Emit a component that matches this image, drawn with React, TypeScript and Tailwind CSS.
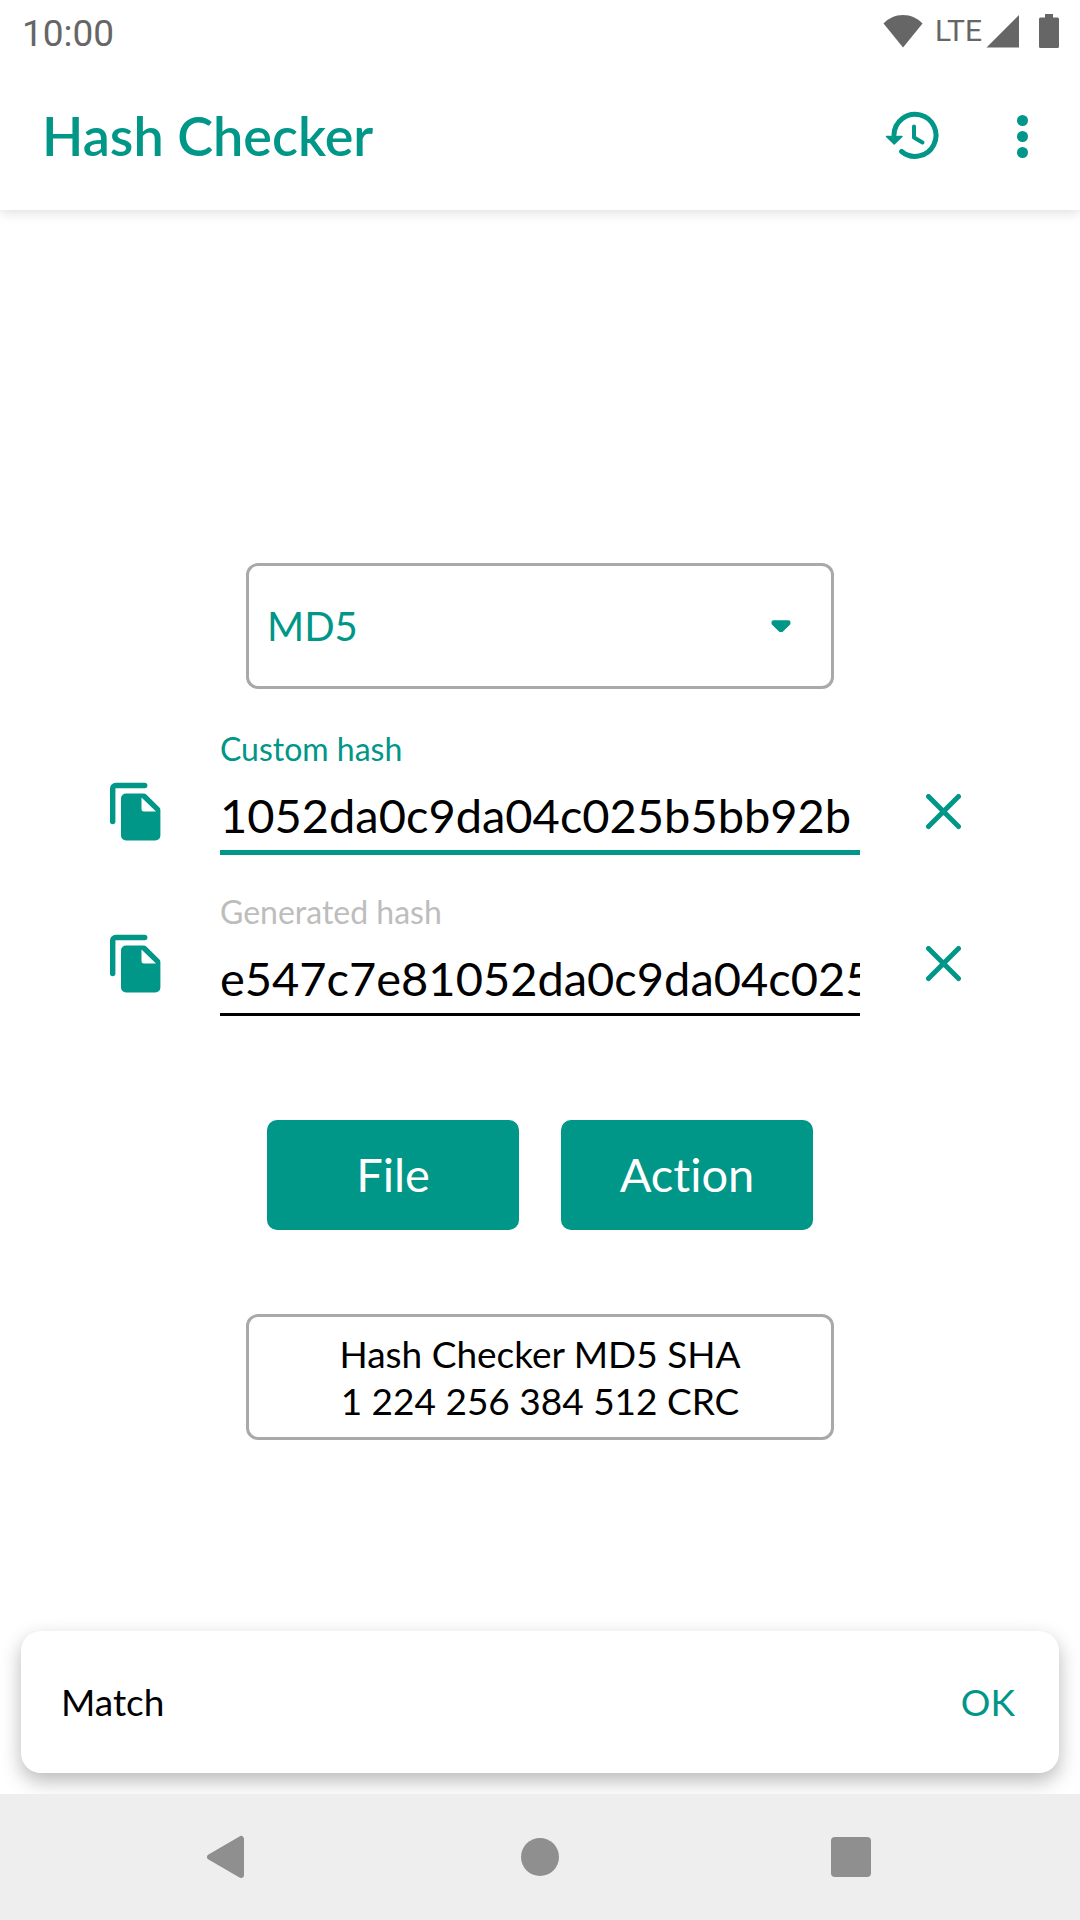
import { useState } from "react";

function HistoryIcon() {
  return (
    <svg width="56" height="56" viewBox="0 0 56 56" fill="none" stroke="currentColor" strokeLinecap="round" aria-hidden="true">
      <path d="M10 27a21 21 0 1 1 7.600 16.500" strokeWidth="5" />
      <path d="M30 18.500v11l8.500 5" strokeWidth="4" strokeLinejoin="round" />
      <path d="M2.500 28.500h15.500l-7.800 7.500z" fill="currentColor" strokeWidth="1.400" strokeLinejoin="round" />
    </svg>
  );
}

function MoreIcon() {
  return (
    <svg width="56" height="56" viewBox="0 0 56 56" fill="currentColor" aria-hidden="true">
      <circle cx="28.500" cy="12.500" r="5.500" />
      <circle cx="28.500" cy="28.500" r="5.500" />
      <circle cx="28.500" cy="44.500" r="5.500" />
    </svg>
  );
}

function CopyIcon() {
  return (
    <svg width="52" height="60" viewBox="0 0 52 60" fill="none" aria-hidden="true">
      <path d="M2.700 39.500V6.500a3 3 0 0 1 3-3h29" stroke="currentColor" strokeWidth="5.400" strokeLinecap="round" />
      <path
        d="M16 11.500h17.500a4 4 0 0 1 3 1.200l12.700 12.600a4 4 0 0 1 1.200 3V53.500a5 5 0 0 1-5 5H16a5 5 0 0 1-5-5v-37a5 5 0 0 1 5-5z"
        fill="currentColor"
      />
      <path d="M31.500 15.500v11.500a2.500 2.500 0 0 0 2.500 2.500H46z" fill="white" />
    </svg>
  );
}

function CloseIcon() {
  return (
    <svg width="36" height="36" viewBox="0 0 36 36" stroke="currentColor" strokeWidth="5" strokeLinecap="round" aria-hidden="true">
      <path d="M2.500 2.500l30 30M32.500 2.500l-30 30" />
    </svg>
  );
}

type HashFieldProps = {
  id: string;
  label: string;
  value: string;
  active?: boolean;
  onChange: (value: string) => void;
};

function HashField({ id, label, value, active, onChange }: HashFieldProps) {
  return (
    <div className="flex h-[163px] flex-col pt-1">
      <label htmlFor={id} className={active ? "text-[32px] leading-10 text-[#009688]" : "text-[32px] leading-10 text-[#bdbdbd]"}>
        {label}
      </label>
      <input
        id={id}
        type="text"
        value={value}
        spellCheck={false}
        onChange={(e) => onChange(e.target.value)}
        className={
          active
            ? "h-[86px] w-full border-b-[5px] border-[#009688] pt-3 text-[47px] text-black outline-none"
            : "h-[84px] w-full border-b-[3px] border-black pt-3 text-[47px] text-black outline-none"
        }
      />
    </div>
  );
}

function StatusBar() {
  return (
    <div className="flex h-[62px] items-center justify-between pr-5 pl-[22px] font-[Roboto,sans-serif] text-[#666666]">
      <time className="pt-1 text-[37px] leading-none">10:00</time>
      <div className="flex items-center">
        <svg width="40" height="34" viewBox="0 0 40 34" fill="currentColor" aria-hidden="true">
          <path d="M20 33.500L.5 9.500C6 4 12 1 20 1s14 3 19.500 8.500z" />
        </svg>
        <span className="ml-3 font-['Liberation_Sans_Narrow',Roboto,sans-serif] text-[30px] leading-none">LTE</span>
        <svg className="ml-1" width="34" height="34" viewBox="0 0 34 34" fill="currentColor" aria-hidden="true">
          <path d="M33 1v32.500H.5z" />
        </svg>
        <svg className="ml-[18px]" width="22" height="34" viewBox="0 0 22 34" fill="currentColor" aria-hidden="true">
          <path d="M7 0h8v3.500h4.500A1.500 1.500 0 0 1 21 5v27.500a1.500 1.500 0 0 1-1.500 1.500h-17A1.500 1.500 0 0 1 1 32.500V5a1.500 1.500 0 0 1 1.500-1.500H7z" />
        </svg>
      </div>
    </div>
  );
}

function AppBar() {
  return (
    <div className="flex h-[148px] items-center justify-between pr-[30px] pl-[42px] text-[#009688]">
      <h1 className="text-[54px] leading-none font-semibold">Hash Checker</h1>
      <div className="flex gap-[54px]">
        <button type="button" aria-label="History">
          <HistoryIcon />
        </button>
        <button type="button" aria-label="More options">
          <MoreIcon />
        </button>
      </div>
    </div>
  );
}

function NavigationBar() {
  return (
    <nav className="relative grid h-[126px] grid-cols-3 items-center justify-items-center bg-[#eeeeee] px-[74px] text-[#8f8f8f]">
      <button type="button" aria-label="Back">
        <svg width="44" height="44" viewBox="0 0 44 44" fill="currentColor" stroke="currentColor" strokeWidth="6" strokeLinejoin="round">
          <path d="M3 22L34 4v36z" />
        </svg>
      </button>
      <button type="button" aria-label="Home" className="size-[38px] rounded-full bg-current" />
      <button type="button" aria-label="Recent apps" className="size-10 rounded bg-current" />
    </nav>
  );
}

export default function App() {
  const [type, setType] = useState("MD5");
  const [custom, setCustom] = useState("1052da0c9da04c025b5bb92b");
  const [generated, setGenerated] = useState("e547c7e81052da0c9da04c025b5bb92b");

  return (
    <div className="flex min-h-screen flex-col bg-white font-[Lato,sans-serif] text-black [font-variant-ligatures:none]">
      <header className="relative z-10 bg-white shadow-[0_2px_12px_rgba(0,0,0,0.14)]">
        <StatusBar />
        <AppBar />
      </header>

      <main className="relative flex flex-1 flex-col items-stretch justify-center pb-0.5">
        <div className="relative mx-[246px]">
          <select
            aria-label="Hash type"
            value={type}
            onChange={(e) => setType(e.target.value)}
            className="block h-[126px] w-full appearance-none rounded-xl border-3 border-[#a9a9a9] bg-white px-[18px] text-[40px] text-[#009688]"
          >
            <option>MD5</option>
            <option>SHA-1</option>
            <option>SHA-224</option>
            <option>SHA-256</option>
            <option>SHA-384</option>
            <option>SHA-512</option>
            <option>CRC-32</option>
          </select>
          <svg
            className="pointer-events-none absolute top-[57px] right-[43px] text-[#009688]"
            width="20"
            height="13"
            viewBox="0 0 20 13"
            fill="currentColor"
            stroke="currentColor"
            strokeWidth="4"
            strokeLinejoin="round"
            aria-hidden="true"
          >
            <path d="M2.500 2.300h15v1L10.600 10H9.400L2.500 3.300z" />
          </svg>
        </div>

        <div className="mt-9 grid grid-cols-[168px_1fr_168px] items-center px-[52px] text-[#009688]">
          <div className="flex flex-col items-center">
            <button type="button" aria-label="Copy custom hash" className="flex h-[152px] items-center">
              <CopyIcon />
            </button>
            <button type="button" aria-label="Copy generated hash" className="flex h-[152px] items-center">
              <CopyIcon />
            </button>
          </div>
          <div>
            <HashField id="custom" label="Custom hash" value={custom} onChange={setCustom} active />
            <HashField id="generated" label="Generated hash" value={generated} onChange={setGenerated} />
          </div>
          <div className="flex flex-col items-center">
            <button type="button" aria-label="Clear custom hash" onClick={() => setCustom("")} className="flex h-[152px] items-center">
              <CloseIcon />
            </button>
            <button type="button" aria-label="Clear generated hash" onClick={() => setGenerated("")} className="flex h-[152px] items-center">
              <CloseIcon />
            </button>
          </div>
        </div>

        <div className="mx-[267px] mt-[69px] grid grid-cols-2 gap-[42px] text-[47px] text-white">
          <button type="button" className="h-[110px] rounded-[10px] bg-[#009688]">
            File
          </button>
          <button type="button" className="h-[110px] rounded-[10px] bg-[#009688]">
            Action
          </button>
        </div>

        <p className="mx-[246px] mt-[84px] rounded-xl border-3 border-[#a9a9a9] px-10 py-[13px] text-center text-[37px] leading-[47px]">
          Hash Checker MD5 SHA
          <br />1 224 256 384 512 CRC
        </p>

        <div
          role="status"
          className="absolute inset-x-[21px] bottom-[21px] flex h-[142px] items-center justify-between rounded-[20px] bg-white pr-11 pl-10 text-[37px] shadow-[0_8px_20px_rgba(0,0,0,0.28)]"
        >
          <span>Match</span>
          <button type="button" className="text-[#009688]">
            OK
          </button>
        </div>
      </main>

      <NavigationBar />
    </div>
  );
}
